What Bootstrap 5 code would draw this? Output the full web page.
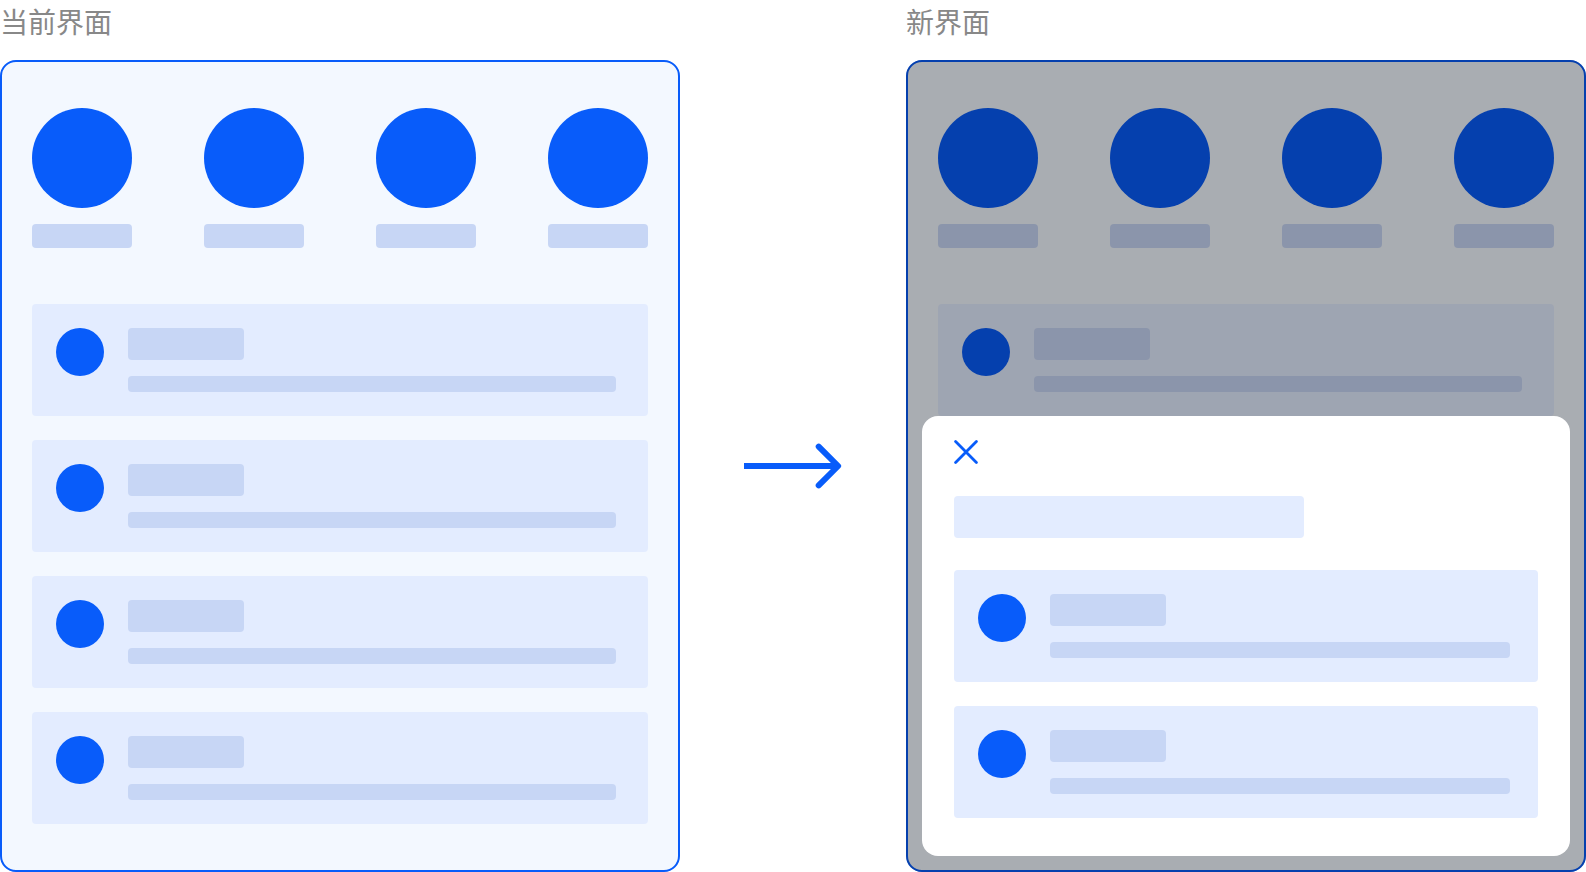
<!DOCTYPE html>
<html lang="zh-CN">
<head>
<meta charset="utf-8">
<meta name="viewport" content="width=device-width, initial-scale=1">
<title>界面对比</title>
<link href="https://cdn.jsdelivr.net/npm/bootstrap@5.3.0/dist/css/bootstrap.min.css" rel="stylesheet">
<style>
  :root {
    --accent: #085cfa;
    --surface: #f3f8ff;
    --tile: #e3ecff;
    --block: #c7d6f5;
  }
  body { font-family: "Noto Sans CJK SC", sans-serif; background: #fff; }

  /* Two screens with the arrow between them */
  .compare { display: grid; grid-template-columns: 680fr 226fr 680fr; row-gap: 18px; }
  .screen-title { font-size: 28px; line-height: 42px; font-weight: 400; color: #888; }

  .screen { background: var(--surface); border: 2px solid var(--accent); border-radius: 16px; padding: 46px 30px; }
  .screen-dim { position: absolute; inset: -2px; border-radius: 16px; background: rgba(0, 0, 0, .3); }

  .dot { background: var(--accent); border-radius: 50%; flex: none; }
  .dot-lg { width: 100px; height: 100px; }
  .dot-sm { width: 48px; height: 48px; }
  .ph { background: var(--block); border-radius: 4px; max-width: 100%; }
  .ph-label { width: 100px; height: 24px; }
  .ph-name { width: 116px; height: 32px; }
  .ph-line { height: 16px; }
  .ph-title { width: 350px; height: 42px; background: var(--tile); }

  .shortcuts { margin-bottom: 56px; }
  .tile { background: var(--tile); border-radius: 4px; padding: 24px 32px 24px 24px; }

  /* Sheet laid over the dimmed screen */
  .sheet { position: absolute; left: 14px; right: 14px; bottom: 14px; background: #fff; border-radius: 16px; padding: 24px 32px 38px; }
  .sheet .ph-title { margin: 32px 0; }
  .sheet .tile { padding-right: 28px; }
  .sheet-close { width: 24px; height: 24px; color: var(--accent); }
</style>
</head>
<body>
<main class="compare">
  <h2 class="screen-title m-0">当前界面</h2>
  <span></span>
  <h2 class="screen-title m-0">新界面</h2>

  <section class="screen" aria-label="当前界面">
    <div class="shortcuts d-flex justify-content-between">
      <div class="d-flex flex-column gap-3"><div class="dot dot-lg"></div><div class="ph ph-label"></div></div>
      <div class="d-flex flex-column gap-3"><div class="dot dot-lg"></div><div class="ph ph-label"></div></div>
      <div class="d-flex flex-column gap-3"><div class="dot dot-lg"></div><div class="ph ph-label"></div></div>
      <div class="d-flex flex-column gap-3"><div class="dot dot-lg"></div><div class="ph ph-label"></div></div>
    </div>
    <div class="d-flex flex-column gap-4">
      <div class="tile d-flex gap-4"><div class="dot dot-sm"></div><div class="flex-grow-1 d-flex flex-column gap-3"><div class="ph ph-name"></div><div class="ph ph-line"></div></div></div>
      <div class="tile d-flex gap-4"><div class="dot dot-sm"></div><div class="flex-grow-1 d-flex flex-column gap-3"><div class="ph ph-name"></div><div class="ph ph-line"></div></div></div>
      <div class="tile d-flex gap-4"><div class="dot dot-sm"></div><div class="flex-grow-1 d-flex flex-column gap-3"><div class="ph ph-name"></div><div class="ph ph-line"></div></div></div>
      <div class="tile d-flex gap-4"><div class="dot dot-sm"></div><div class="flex-grow-1 d-flex flex-column gap-3"><div class="ph ph-name"></div><div class="ph ph-line"></div></div></div>
    </div>
  </section>

  <div class="d-flex align-items-center justify-content-center">
    <svg width="98" height="46" viewBox="0 0 98 46" fill="none" stroke="#085cfa" stroke-width="6" aria-hidden="true">
      <path d="M0 23H93"/>
      <path d="M74.7 3.6L94.1 23L74.7 42.4" stroke-linecap="round" stroke-linejoin="round"/>
    </svg>
  </div>

  <section class="screen position-relative" aria-label="新界面">
    <div class="shortcuts d-flex justify-content-between">
      <div class="d-flex flex-column gap-3"><div class="dot dot-lg"></div><div class="ph ph-label"></div></div>
      <div class="d-flex flex-column gap-3"><div class="dot dot-lg"></div><div class="ph ph-label"></div></div>
      <div class="d-flex flex-column gap-3"><div class="dot dot-lg"></div><div class="ph ph-label"></div></div>
      <div class="d-flex flex-column gap-3"><div class="dot dot-lg"></div><div class="ph ph-label"></div></div>
    </div>
    <div class="d-flex flex-column gap-4">
      <div class="tile d-flex gap-4"><div class="dot dot-sm"></div><div class="flex-grow-1 d-flex flex-column gap-3"><div class="ph ph-name"></div><div class="ph ph-line"></div></div></div>
    </div>
    <div class="screen-dim"></div>
    <div class="sheet" role="dialog" aria-label="新界面">
      <button type="button" class="sheet-close btn border-0 p-0 d-block" aria-label="关闭">
        <svg class="d-block" width="24" height="24" viewBox="0 0 24 24" fill="none" stroke="currentColor" stroke-width="2.8" stroke-linecap="round" aria-hidden="true">
          <path d="M1.6 1.6L22.4 22.4M22.4 1.6L1.6 22.4"/>
        </svg>
      </button>
      <div class="ph ph-title"></div>
      <div class="d-flex flex-column gap-4">
        <div class="tile d-flex gap-4"><div class="dot dot-sm"></div><div class="flex-grow-1 d-flex flex-column gap-3"><div class="ph ph-name"></div><div class="ph ph-line"></div></div></div>
        <div class="tile d-flex gap-4"><div class="dot dot-sm"></div><div class="flex-grow-1 d-flex flex-column gap-3"><div class="ph ph-name"></div><div class="ph ph-line"></div></div></div>
      </div>
    </div>
  </section>
</main>
<script src="https://cdn.jsdelivr.net/npm/bootstrap@5.3.0/dist/js/bootstrap.bundle.min.js"></script>
</body>
</html>
